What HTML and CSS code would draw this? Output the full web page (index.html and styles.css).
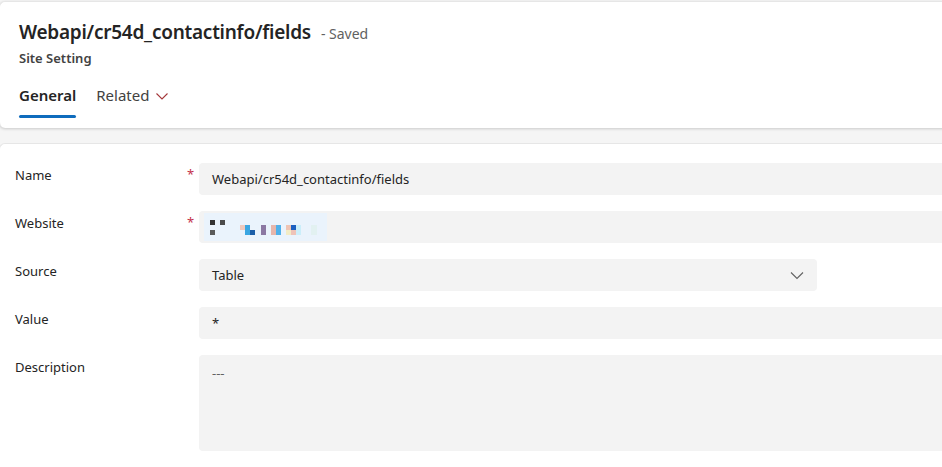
FILE: index.html
```html
<!DOCTYPE html>
<html lang="en">
<head>
<meta charset="utf-8">
<title>Site Setting</title>
<link rel="stylesheet" href="styles.css">
</head>
<body>
<div class="page">
  <header class="head-card">
    <div class="title-row">
      <h1 class="title">Webapi/cr54d_contactinfo/fields</h1>
      <span class="saved">- Saved</span>
    </div>
    <div class="entity">Site Setting</div>
    <nav class="tabs">
      <div class="tab active">General</div>
      <div class="tab">Related
        <svg class="tab-chev" width="14" height="14" viewBox="0 0 14 14"><path d="M1.5 4.5 L7 10 L12.5 4.5" fill="none" stroke="#a4373a" stroke-width="1.1"/></svg>
      </div>
    </nav>
  </header>
  <main class="body-card">
    <div class="row">
      <div class="label">Name</div>
      <div class="req">*</div>
      <div class="field">Webapi/cr54d_contactinfo/fields</div>
    </div>
    <div class="row">
      <div class="label">Website</div>
      <div class="req">*</div>
      <div class="field">
        <div class="lookup">
          <span class="px" style="left:6px;top:7px;background:#333"></span>
          <span class="px" style="left:16px;top:7px;background:#4a4a4a"></span>
          <span class="px" style="left:6px;top:17px;background:#5a5a5a"></span>
          <span class="px" style="left:36px;top:12px;background:#efc9bd"></span>
          <span class="px tall" style="left:41px;top:12px;background:#3aa6e2"></span>
          <span class="px" style="left:46px;top:17px;background:#1b5ea8"></span>
          <span class="px tall" style="left:57px;top:12px;background:#8b78a3"></span>
          <span class="px tall" style="left:67px;top:12px;background:#e6b6ac"></span>
          <span class="px tall" style="left:72px;top:12px;background:#4fb0ea"></span>
          <span class="px" style="left:82px;top:12px;background:#efc4b4"></span>
          <span class="px" style="left:82px;top:17px;background:#f2ecc6"></span>
          <span class="px" style="left:87px;top:12px;background:#1c5fc0"></span>
          <span class="px" style="left:87px;top:17px;background:#eec3b8"></span>
          <span class="px tall" style="left:92px;top:12px;background:#cbeefa"></span>
          <span class="px tall faint" style="left:107px;top:12px;background:#e2f1f1"></span>
        </div>
      </div>
    </div>
    <div class="row">
      <div class="label">Source</div>
      <div class="req"></div>
      <div class="field select">Table
        <svg class="sel-chev" width="14" height="14" viewBox="0 0 14 14"><path d="M1 4.5 L7 10.5 L13 4.5" fill="none" stroke="#616161" stroke-width="1.1"/></svg>
      </div>
    </div>
    <div class="row">
      <div class="label">Value</div>
      <div class="req"></div>
      <div class="field">*</div>
    </div>
    <div class="row">
      <div class="label">Description</div>
      <div class="req"></div>
      <div class="field area">---</div>
    </div>
  </main>
</div>
</body>
</html>
```
FILE: styles.css
```css
* { box-sizing: border-box; }
html, body {
  margin: 0;
  padding: 0;
  background: #f5f5f5;
  overflow: hidden;
}
body {
  font-family: "Noto Sans", "Open Sans", sans-serif;
  color: #242424;
  width: 942px;
  height: 467px;
}
.page {
  display: flex;
  flex-direction: column;
  gap: 15px;
  padding-top: 1px;
}
.head-card {
  background: #fff;
  width: 960px;
  height: 127px;
  border-top: 1px solid #e6e6e6;
  border-left: 1px solid #e6e6e6;
  border-radius: 6px;
  box-shadow: 0 1px 3px rgba(0,0,0,0.18);
  padding: 17px 0 0 19px;
  margin-left: -1px;
}
.title-row {
  display: flex;
  align-items: baseline;
  gap: 10px;
  height: 28px;
}
.title {
  margin: 0;
  font-size: 19px;
  font-weight: 600;
  letter-spacing: -0.25px;
  color: #242424;
}
.saved {
  font-size: 14px;
  color: #616161;
}
.entity {
  font-size: 13px;
  font-weight: 600;
  margin-top: 2px;
  color: #424242;
}
.tabs {
  display: flex;
  gap: 20px;
  margin-top: 18px;
}
.tab {
  font-size: 15px;
  height: 33px;
  display: flex;
  align-items: flex-start;
  gap: 6px;
  color: #424242;
  position: relative;
}
.tab.active {
  font-weight: 600;
  color: #242424;
}
.tab.active::after {
  content: "";
  position: absolute;
  left: 0; right: 0; bottom: 0;
  height: 3px;
  border-radius: 2px;
  background: #0f6cbd;
}
.tab-chev { margin-top: 4px; }
.body-card {
  background: #fff;
  width: 960px;
  height: 340px;
  border-top: 1px solid #e6e6e6;
  border-left: 1px solid #e6e6e6;
  border-radius: 6px;
  margin-left: -1px;
  padding-top: 19px;
  display: flex;
  flex-direction: column;
  gap: 16px;
}
.row {
  display: flex;
  align-items: flex-start;
}
.label {
  width: 170px;
  padding-left: 15px;
  font-size: 13px;
  padding-top: 3px;
  color: #242424;
}
.req {
  width: 29px;
  color: #c4314b;
  font-size: 13px;
  padding-left: 17px;
  padding-top: 2px;
}
.field {
  flex: 1;
  height: 32px;
  background: #f3f3f3;
  border-radius: 4px;
  font-size: 13px;
  padding: 7px 13px;
  color: #242424;
}
.field.select {
  flex: 0 0 618px;
  display: flex;
  justify-content: space-between;
  align-items: center;
  padding: 0 13px 0 13px;
}
.field.area {
  height: 96px;
  padding-top: 9px;
  color: #616161;
}
.lookup {
  position: relative;
  margin: -5px 0 0 -8px;
  width: 123px;
  height: 28px;
  background: #eaf3fc;
}
.px {
  position: absolute;
  width: 5px;
  height: 5px;
}
.px.tall { height: 10px; }
.px.faint { width: 6px; }
```
